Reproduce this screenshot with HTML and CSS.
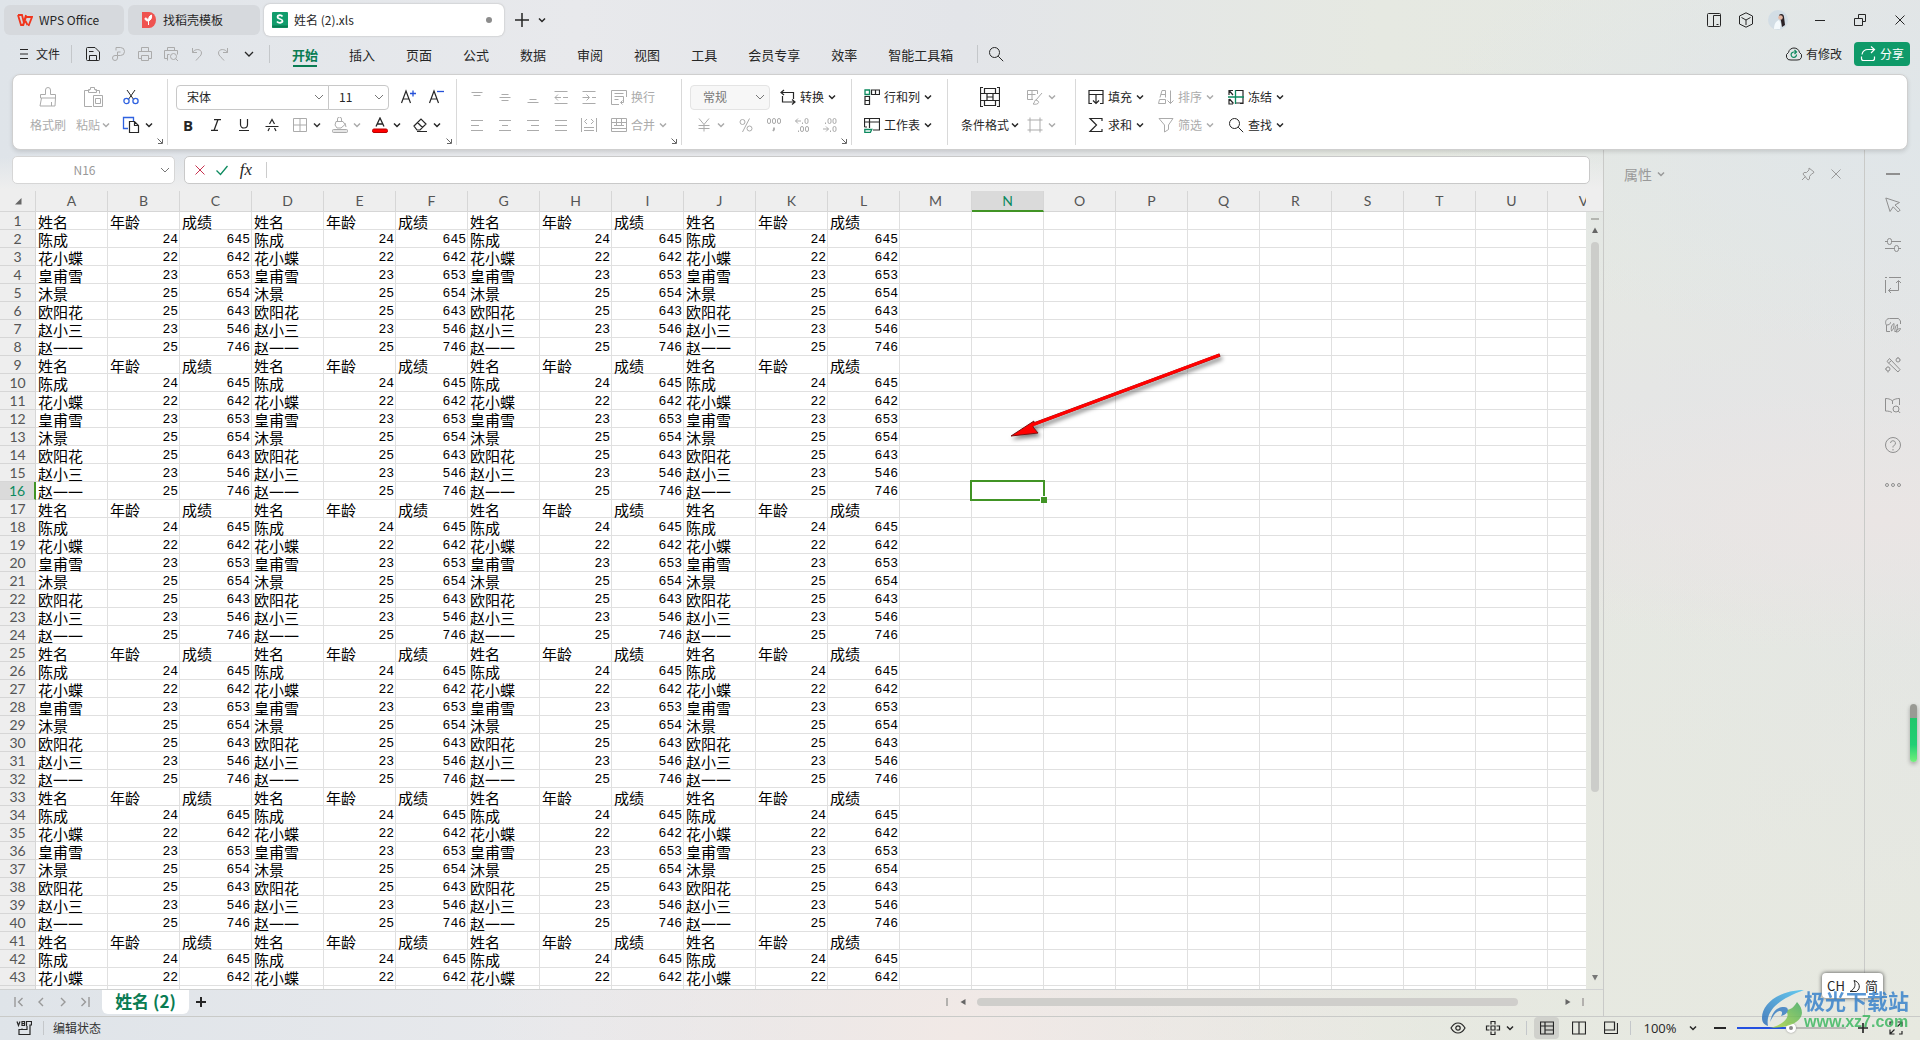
FILE: index.html
```html
<!DOCTYPE html>
<html lang="zh-CN">
<head>
<meta charset="utf-8">
<meta name="viewport" content="width=device-width, initial-scale=1">
<title>姓名 (2).xls - WPS Office</title>
<link rel="stylesheet" href="styles.css">
</head>
<body>
<svg class="sprite" aria-hidden="true">
  <symbol id="chev" viewBox="0 0 8 8"><path d="M1 2.500 4 5.500 7 2.500" stroke-width="1.500"/></symbol>
  <symbol id="launch" viewBox="0 0 8 8"><path d="M1.500 1.500 6 6M6.500 2v4.500H2"/></symbol>
  <symbol id="search" viewBox="0 0 16 16"><circle cx="6.500" cy="6.500" r="5"/><path d="m10.200 10.200 5 5"/></symbol>
  <symbol id="save" viewBox="0 0 16 16"><path d="M1.500 2.500a1 1 0 0 1 1-1H10l4.500 4.500v7.500a1 1 0 0 1-1 1h-11a1 1 0 0 1-1-1zM4.500 14.500v-5h7v5M4 5.500h4.500"/></symbol>
  <symbol id="link" viewBox="0 0 16 16"><path d="M5 4.500v-3h4.500a4 4 0 0 1 0 8H6.500v2.500a2.500 2.500 0 1 1-2.500-2.500h2.500M9.500 6H6.500v3"/></symbol>
  <symbol id="print" viewBox="0 0 16 16"><path d="M4.500 5.500v-4h7v4M4.500 12.500h-3v-7h13v7h-3M4.500 9.500h7v5h-7z"/></symbol>
  <symbol id="preview" viewBox="0 0 16 16"><path d="M4.500 4.500v-3h7v3M5 12.500H1.500v-8h13v4M4.500 14.500V8.500h2"/><circle cx="10.500" cy="10.500" r="3"/><path d="m12.700 12.700 2.300 2.300"/></symbol>
  <symbol id="undo" viewBox="0 0 16 16"><path d="M3.500 2v4.500H8M3.500 6.500c2-4 9-4 9 .5 0 3-3 4-5.500 7.500"/></symbol>
  <symbol id="redo" viewBox="0 0 16 16"><path d="M12.500 2v4.500H8M12.500 6.500c-2-4-9-4-9 .5 0 3 3 4 5.500 7.500"/></symbol>
  <symbol id="brush" viewBox="0 0 20 20"><path d="M7.500 7.500V3a2 2 0 0 1 5 0v4.500h5v3.500h-15V7.500zM3.500 11l-1.500 8h15l.5-8M13.500 19v-4"/></symbol>
  <symbol id="paste" viewBox="0 0 20 20"><path d="M6.500 3.500h-5v16H9M12.500 3.500h4v3M5.500 5.500v-3h2V.5h4v2h2v3zM10.500 8.500h9v11h-9zM12.500 11.500h5v5h-5z"/></symbol>
  <symbol id="cut" viewBox="0 0 16 16"><path d="M4 1l7 10M12 1 5 11"/><g stroke="#2f62e0" stroke-width="1.300"><circle cx="3.500" cy="12" r="2.600"/><circle cx="12.500" cy="12" r="2.600"/></g></symbol>
  <symbol id="copy" viewBox="0 0 18 18"><path d="M6 12.500H1.500v-11h10V5" stroke="#2f62e0" stroke-width="1.300"/><path d="M7.500 5.500h5l4 4v7h-9zM12.500 5.500v4h4" stroke-width="1.200"/></symbol>
  <symbol id="grow" viewBox="0 0 16 16"><path d="M1.500 14 6 2l4.500 12M3 10h6" stroke-width="1.200"/><path d="M10 4.500h6M13 1.500v6" stroke="#2450d8" stroke-width="1.300"/></symbol>
  <symbol id="shrink" viewBox="0 0 16 16"><path d="M1.500 14 6 2l4.500 12M3 10h6" stroke-width="1.200"/><path d="M9 2.500h7" stroke="#2450d8" stroke-width="1.300"/></symbol>
  <symbol id="strike" viewBox="0 0 16 16"><path d="M1.500 9.500h13" /><path d="M5.500 7 8 2.500 10.500 7M4 14l1.500-3M12 14l-1.500-3" stroke-width="1.200"/></symbol>
  <symbol id="borders" viewBox="0 0 16 16"><path d="M1.500 1.500h13v13h-13zM8 1.500v13M1.500 8h13"/></symbol>
  <symbol id="fill" viewBox="0 0 16 16"><path d="M4 4.500h7l2 3-4 3.500H5L3 8zM5.500 4.500V2a2 2 0 0 1 4 0v2.500M13 6l1 4"/><rect x=".5" y="12.500" width="15" height="3" rx="1" fill="#e6e6e6"/></symbol>
  <symbol id="fontcolor" viewBox="0 0 16 16"><path d="M4 9.500 8 1l4 8.500M5.500 7h5" stroke-width="1.300"/><rect x=".5" y="12" width="15" height="3.500" rx="1.500" fill="#f00" stroke="#b00"/></symbol>
  <symbol id="eraser" viewBox="0 0 16 16"><path d="M2 9l7-7 5 5-6 6H5zM5.500 5.500l5 5M5 14.500h10" stroke-width="1.200"/></symbol>
  <symbol id="atop" viewBox="0 0 16 16"><path d="M2.500 3.500h11M4.500 6.500h7"/></symbol>
  <symbol id="amid" viewBox="0 0 16 16"><path d="M4.500 5.500h7M2.500 8.500h11M4.500 11.500h7"/></symbol>
  <symbol id="abot" viewBox="0 0 16 16"><path d="M4.500 10.500h7M2.500 13.500h11"/></symbol>
  <symbol id="outdent" viewBox="0 0 16 16"><path d="M1.500 2.500h13M1.500 14.500h13M2 8.500h6M10 8.500h5M5 5.500l-3 3 3 3"/></symbol>
  <symbol id="indent" viewBox="0 0 16 16"><path d="M1.500 2.500h13M1.500 14.500h13M1.500 8.500H8M11 8.500h4M5.500 5.500l3 3-3 3"/></symbol>
  <symbol id="left" viewBox="0 0 16 16"><path d="M2 3.500h12M2 8.500h8M2 13.500h12"/></symbol>
  <symbol id="center" viewBox="0 0 16 16"><path d="M2 3.500h12M5 8.500h6M2 13.500h12"/></symbol>
  <symbol id="right" viewBox="0 0 16 16"><path d="M2 3.500h12M6 8.500h8M2 13.500h12"/></symbol>
  <symbol id="justify" viewBox="0 0 16 16"><path d="M2 3.500h12M2 8.500h12M2 13.500h12"/></symbol>
  <symbol id="distribute" viewBox="0 0 16 16"><path d="M.5 1v14M15.500 1v14M6 2 3.500 4.500 6 7M10 2l2.500 2.500L10 7M3 10.500h10M3 13.500h10"/></symbol>
  <symbol id="wrap" viewBox="0 0 16 16"><path d="M8 15.500H.5v-14h15V8M3.500 4.500h9M3.500 7.500h9v6H10M3.500 10.500h4M11.500 11.500l-2 2 2 2"/></symbol>
  <symbol id="merge" viewBox="0 0 16 16"><path d="M.5 1.500h15v13H.5zM.5 5.500h15M.5 11.500h15M5.500 1.500v7M10.500 1.500v7M3 8.500h10"/></symbol>
  <symbol id="convert" viewBox="0 0 16 16"><path d="M4 1 1 3.500 4 6M1 3.500h12.500V10M12 10.500l3 2.500-3 2.500M15 13H2.500V7" stroke-width="1.200"/></symbol>
  <symbol id="yen" viewBox="0 0 16 16"><path d="m3 1.500 5 6 5-6M2.500 8.500h11M2.500 11.500h11M8 7.500v7"/></symbol>
  <symbol id="pct" viewBox="0 0 16 16"><circle cx="4.500" cy="5" r="2.500"/><circle cx="11.500" cy="11.500" r="2.500"/><path d="M11.500 1.500 4.500 15"/></symbol>
  <symbol id="thou" viewBox="0 0 16 16"><rect x="1.500" y="1.500" width="3" height="5" rx="1.500"/><rect x="6.500" y="1.500" width="3" height="5" rx="1.500"/><rect x="11.500" y="1.500" width="3" height="5" rx="1.500"/><path d="M8 10.500v2l-1 1.500" stroke-width="1.800"/></symbol>
  <symbol id="decinc" viewBox="0 0 16 16"><path d="M7 4H1.500M4 1.500 1.500 4 4 6.500M8.500 5.500v1.500M4.500 13.500V15"/><rect x="11" y="1.500" width="3" height="5" rx="1.500"/><rect x="6.500" y="9.500" width="3" height="5" rx="1.500"/><rect x="11.500" y="9.500" width="3" height="5" rx="1.500"/></symbol>
  <symbol id="decdec" viewBox="0 0 16 16"><path d="M1 12h5.500M4 9.500 6.500 12 4 14.500M3.500 5.500v1.500M8.500 13.500V15"/><rect x="6" y="1.500" width="3" height="5" rx="1.500"/><rect x="11" y="1.500" width="3" height="5" rx="1.500"/><rect x="11" y="9.500" width="3" height="5" rx="1.500"/></symbol>
  <symbol id="rowcol" viewBox="0 0 16 16"><path d="M1 1h4.500v4.500H1z" stroke="#0d8a5f" stroke-width="1.300"/><path d="M7.500 1h8v4.500h-8zM11.500 1v4.500M1 7.500h4.500v8H1zM1 11.500h4.500" stroke-width="1.200"/></symbol>
  <symbol id="sheet" viewBox="0 0 16 16"><path d="M.5 10V1.500h15v11.500H9M.5 5h15M5.500 1.500V11M.5 10H3" stroke-width="1.200"/><path d="M.8 12.500h7l-1.500 3H.8z" stroke="#0d8a5f" stroke-width="1.300"/></symbol>
  <symbol id="cond" viewBox="0 0 20 20"><path d="M3 .5H.5v19H3M17 .5h2.500v19H17M4.500 1.500h11v5h-11zM1 6.500h18M1 13.500h18M4.500 13.500h11v5h-11zM7 10h6M7 6.500v7M13 6.500v7" stroke-width="1.200"/></symbol>
  <symbol id="tstyle" viewBox="0 0 16 16"><path d="M6 10.500H.5v-9h10V5M.5 5.500h8M5 1.500v9M15 4l-6 7M11 12c2 2-1 4-5 3 2-1 1-4 3-4z"/></symbol>
  <symbol id="cstyle" viewBox="0 0 16 16"><path d="M3 .5v15M13 .5v15M.5 3h15M.5 13h15"/></symbol>
  <symbol id="fillin" viewBox="0 0 16 16"><path d="M4 14.500H1v-13h14v13h-3M1 5.500h14M8 5.500v9M5 11.500l3 3 3-3" stroke-width="1.200"/></symbol>
  <symbol id="sum" viewBox="0 0 16 16"><path d="M14 4V1.500H2L8.500 8 2 14.500h12V12" stroke-width="1.200"/></symbol>
  <symbol id="sort" viewBox="0 0 16 16"><path d="M2 8.500 4 1.500h3.500v7M3 5.500h4M.5 14.500l1-4h6v4zM12.500 1.500v13M9.500 11.500l3 3 3-3"/></symbol>
  <symbol id="filter" viewBox="0 0 16 16"><path d="M1 1.500h14L10.500 8v4.500L6.500 15V8z"/></symbol>
  <symbol id="freeze" viewBox="0 0 16 16"><path d="M8 1.500h7V14H8M1 6V1.500h4M1 10v5h4M1.500 2 5 6M1.500 10l4 4.500M12 1.500h3v13h-3" stroke-width="1.200"/><path d="M0 8h16M7.500 1v14" stroke="#0d8a5f" stroke-width="1.300"/></symbol>
  <symbol id="cross" viewBox="0 0 12 12"><path d="m1.500 1.500 9 9M10.500 1.500l-9 9"/></symbol>
  <symbol id="tick" viewBox="0 0 12 12"><path d="M.5 6.500 4.500 10.500 11.500 2" stroke-width="1.300"/></symbol>
  <symbol id="dock" viewBox="0 0 16 16"><rect x="1.500" y="1.500" width="13" height="13" rx="1"/><path d="M7.500 14.500v-11h7M10.500 12.500h2"/></symbol>
  <symbol id="cube" viewBox="0 0 16 16"><path d="M8 .8 14.500 4v8L8 15.200 1.500 12V4zM3.500 5.500 8 8l4.500-2.500M8 8v5"/></symbol>
  <symbol id="cloud" viewBox="0 0 16 16"><path d="M5 14a4 4 0 0 1-2.500-7.500C3 3.500 5.500 2 8 2s5 1.500 5.500 4.500A4 4 0 0 1 11 14z"/><path d="M10.500 8.500A2.700 2.700 0 1 1 8 6h1.500M8.500 4l2 2-2 2" stroke="#0d8a5f" stroke-width="1.200"/></symbol>
  <symbol id="share" viewBox="0 0 16 16"><path d="M2 8.500c.5-3 3-5 6-5h6M11 .5l3.500 3-3.500 3.500M1.500 10.500v2a2 2 0 0 0 2 2h9a2 2 0 0 0 2-2v-2" stroke-width="1.200"/></symbol>
  <symbol id="pin" viewBox="0 0 14 14"><path d="M8 1l5 4-1 1.500H11L8.500 9.500v2.500L7 13 2 7l1-1.500h2.500L8 3zM4.500 9.500 1 13"/></symbol>
  <symbol id="pointer" viewBox="0 0 16 16"><path d="M.8 1 14.500 5.500 10 8l5.200 5-2 2-5-5.200L5 14.500z"/></symbol>
  <symbol id="sliders" viewBox="0 0 16 16"><path d="M0 4.500h2M7 4.500h9M0 11.500h9M14 11.500h2"/><rect x="2.500" y="1.500" width="4" height="6" rx="2"/><rect x="9.500" y="8.500" width="4" height="6" rx="2"/></symbol>
  <symbol id="transform" viewBox="0 0 16 16"><path d="M.5 3v13M4 .5h12M0 .5h2M13.500 4v9.500h-10M11 6l2.500-2.500L16 6M6 11l-2.500 2.500L6 16"/></symbol>
  <symbol id="gallery" viewBox="0 0 16 16"><path d="M5 14.500H1.500V8C0 7 0 1.500 4.500 1.500h9L15.500 4v3M1.500 8C6 8 5.500 5 5.500 5M6.500 14c-1-4 1-7 2.500-7.500 0 3 0 6-2.500 7.500zM10 15c-.5-4 1-7 2.500-7.500 0 3 0 6-2.500 7.500zM11 15c1-3 3-3.500 4.500-3.500-.5 2-2 3.500-4.500 3.500z"/></symbol>
  <symbol id="wand" viewBox="0 0 16 16"><path d="M4.500 1.500 15 12.500l-2 2.500L2 4.500zM3.500 6 6 4"/><circle cx="13" cy="3" r="2"/><circle cx="3" cy="12" r="2"/><path d="M13 0v1M15.500 3h-1M3 9.500V10M3 14v1.500M0 12h1"/></symbol>
  <symbol id="book" viewBox="0 0 16 16"><path d="M7 3.500C5 2 3 1.500.5 1.500V14c3 0 5 .5 6.500 1.500M7.500 7V3.500C9.500 2 12 1.500 14.500 1.500V8"/><circle cx="11" cy="12" r="3"/><path d="m13.200 14 2 2"/></symbol>
  <symbol id="help" viewBox="0 0 16 16"><circle cx="8" cy="8" r="7.500"/><path d="M5.500 6a2.500 2.500 0 1 1 3.500 2.500c-1 .5-1 1-1 2M8 12v1.500"/></symbol>
  <symbol id="dots" viewBox="0 0 16 16"><circle cx="2" cy="8" r="1.500"/><circle cx="8" cy="8" r="1.500"/><circle cx="14" cy="8" r="1.500"/></symbol>
  <symbol id="first" viewBox="0 0 10 10"><path d="M1 0v10M8.500 1 4.500 5l4 4" stroke-width="1.400"/></symbol>
  <symbol id="prev" viewBox="0 0 10 10"><path d="M7 1 3 5l4 4" stroke-width="1.400"/></symbol>
  <symbol id="next" viewBox="0 0 10 10"><path d="M3 1l4 4-4 4" stroke-width="1.400"/></symbol>
  <symbol id="last" viewBox="0 0 10 10"><path d="M9 0v10M1.500 1l4 4-4 4" stroke-width="1.400"/></symbol>
  <symbol id="plus" viewBox="0 0 12 12"><path d="M6 0v12M0 6h12" stroke-width="1.300"/></symbol>
  <symbol id="macro" viewBox="0 0 16 16"><path d="m1 1.500 1.500 4L4 1.500M6 1.500v4h2.500v-4zM6 3.500h2.500M10.500 6V1.500h5V5H14v9.500H3V9.500h8V6M6 9.500v-1" stroke-width="1.200"/></symbol>
  <symbol id="eye" viewBox="0 0 16 16"><path d="M1 8c2-3.500 4.500-5 7-5s5 1.500 7 5c-2 3.500-4.500 5-7 5S3 11.500 1 8z" stroke-width="1.200"/><circle cx="8" cy="8" r="2.200" stroke-width="1.200"/></symbol>
  <symbol id="hub" viewBox="0 0 16 16"><path d="M6 6h4v4H6zM6 4.500v-3h4v3M6 11.500v3h4v-3M4.500 6h-3v4h3M11.500 6h3v4h-3" stroke-width="1.200"/></symbol>
  <symbol id="vnormal" viewBox="0 0 14 14"><path d="M.5 1h13v12H.5zM.5 5h13M5 1v12M5 9h8.500" stroke-width="1.200"/></symbol>
  <symbol id="vsplit" viewBox="0 0 14 14"><path d="M.5 1h13v12H.5zM7 1v12" stroke-width="1.200"/></symbol>
  <symbol id="vpage" viewBox="0 0 14 14"><path d="M.5 1h10v8H.5zM.5 12.500h13V2M.5 9v3.500" stroke-width="1.200"/></symbol>
  <symbol id="full" viewBox="0 0 14 14"><path d="M8.500 1H13v4.500M13 1 8.500 5.500M5.500 13H1V8.500M1 13l4.500-4.500M1 4V1h3M13 10v3h-3" stroke-width="1.200"/></symbol>
</svg>

<header class="titlebar">
  <nav class="doc-tabs" aria-label="文档">
    <button class="doc-tab tab-home">
      <svg class="logo" viewBox="0 0 16 16"><path d="M1 3h4l2 8 2-6h6l-3.500 9M1 3l3 10h2l3-10M8.500 9l2 4" stroke="#f0361e" stroke-width="1.800"/></svg>
      <span>WPS Office</span>
    </button>
    <button class="doc-tab tab-docer">
      <svg class="logo" viewBox="0 0 16 16"><path d="M1 0h7a7 8 0 0 1 0 16H1z" fill="#ef5350" stroke="none"/><path d="M7.500 13V9C4 9 4 7 4 6c2 0 3 1 3.500 3 0-3 .5-5 3-6 .5 3-.5 5-3 6" fill="#fff" stroke="#fff"/></svg>
      <span>找稻壳模板</span>
    </button>
    <button class="doc-tab tab-doc">
      <svg class="logo" viewBox="0 0 16 16"><rect width="16" height="16" rx="1" fill="#119c6c" stroke="none"/><path d="M0 14.500h16" stroke="#0a7c53" stroke-width="2"/><path d="M10.500 4.500C9 2.500 5.500 3 5.500 5c0 2.500 5 1.500 5 4 0 2-4 2.500-5.500.500" stroke="#fff" stroke-width="1.800"/></svg>
      <span class="doc-name">姓名 (2).xls</span><i class="dirty"></i>
    </button>
    <button class="ico new-tab" aria-label="新建"><svg class="s14"><use href="#plus"/></svg></button>
    <button class="ico tab-list" aria-label="更多标签"><svg class="s8"><use href="#chev"/></svg></button>
  </nav>
  <div class="window-tools">
    <button class="ico" aria-label="侧栏"><svg><use href="#dock"/></svg></button>
    <button class="ico" aria-label="应用"><svg><use href="#cube"/></svg></button>
    <button class="ico avatar-button" aria-label="账号"><svg class="avatar" viewBox="0 0 20 20"><circle cx="10" cy="10" r="10" fill="#d2dde5" stroke="none"/><path d="M6 19c0-5 2-8 5-9l2 4-1 5z" fill="#f4f9fc" stroke="none"/><path d="M11 5c2-2 5-1 5 2l1 8-3 2-1-6z" fill="#2a2226" stroke="none"/><circle cx="12.500" cy="7.500" r="2.300" fill="#e5b8a4" stroke="none"/></svg></button>
    <button class="ico win" aria-label="最小化"><svg class="s12"><path d="M1 6.500h10"/></svg></button>
    <button class="ico win" aria-label="还原"><svg class="s12"><path d="M.5 4.500h8v7h-8zM4.500 4V.5h7v7H9"/></svg></button>
    <button class="ico win" aria-label="关闭"><svg class="s12"><use href="#cross"/></svg></button>
  </div>
</header>

<div class="menubar">
  <button class="file-menu"><svg class="s10" viewBox="0 0 10 10"><path d="M1 .5h8M1 5h8M1 9.500h8"/></svg><span>文件</span></button>
  <i class="vline"></i>
  <div class="quick">
    <button class="ico" aria-label="保存"><svg><use href="#save"/></svg></button>
    <button class="ico off" aria-label="输出"><svg><use href="#link"/></svg></button>
    <button class="ico off" aria-label="打印"><svg><use href="#print"/></svg></button>
    <button class="ico off" aria-label="打印预览"><svg><use href="#preview"/></svg></button>
    <button class="ico off" aria-label="撤销"><svg><use href="#undo"/></svg></button>
    <button class="ico off" aria-label="恢复"><svg><use href="#redo"/></svg></button>
    <button class="ico" aria-label="更多"><svg class="s10" viewBox="0 0 10 10"><path d="m1 3 4 4 4-4" stroke-width="1.300"/></svg></button>
  </div>
  <i class="vline"></i>
  <nav class="menus">
    <a href="#" class="current">开始</a><a href="#">插入</a><a href="#">页面</a><a href="#">公式</a><a href="#">数据</a><a href="#">审阅</a><a href="#">视图</a><a href="#">工具</a><a href="#">会员专享</a><a href="#">效率</a><a href="#">智能工具箱</a>
  </nav>
  <i class="vline"></i>
  <button class="ico menu-search" aria-label="搜索"><svg><use href="#search"/></svg></button>
  <button class="plain changes"><svg><use href="#cloud"/></svg><span>有修改</span></button>
  <button class="share"><svg><use href="#share"/></svg><span>分享</span></button>
</div>

<section class="ribbon" aria-label="开始">
  <div class="group clipboard">
    <button class="big off"><svg class="s20"><use href="#brush"/></svg><span>格式刷</span></button>
    <button class="big off"><svg class="s20"><use href="#paste"/></svg><span>粘贴<svg class="s8"><use href="#chev"/></svg></span></button>
    <div class="rows">
      <div class="row"><button class="ico w28" aria-label="剪切"><svg><use href="#cut"/></svg></button></div>
      <div class="row"><button class="ico w40" aria-label="复制"><svg class="s18"><use href="#copy"/></svg><svg class="s8"><use href="#chev"/></svg></button></div>
    </div>
    <button class="launcher" aria-label="剪贴板设置"><svg class="s8"><use href="#launch"/></svg></button>
  </div>
  <div class="group font">
    <div class="rows">
      <div class="row">
        <div class="combo"><select class="sel family" aria-label="字体"><option>宋体</option></select><select class="sel size" aria-label="字号"><option>11</option></select></div>
        <button class="ico w28 after-combo" aria-label="增大字号"><svg><use href="#grow"/></svg></button>
        <button class="ico w28" aria-label="减小字号"><svg><use href="#shrink"/></svg></button>
      </div>
      <div class="row marks">
        <button class="ico w28 bold" aria-label="加粗">B</button>
        <button class="ico w28" aria-label="倾斜"><svg class="s12"><path d="M4 .5h7M1 11.500h7M8 .5l-4 11" stroke-width="1.300"/></svg></button>
        <button class="ico w28" aria-label="下划线"><svg class="s12"><path d="M2.500 0v5.500a3.500 3.500 0 0 0 7 0V0M1 11.500h10" stroke-width="1.200"/></svg></button>
        <button class="ico w28" aria-label="删除线"><svg><use href="#strike"/></svg></button>
        <button class="ico w40 off" aria-label="边框"><svg><use href="#borders"/></svg><svg class="s8 dark"><use href="#chev"/></svg></button>
        <button class="ico w40 off" aria-label="填充颜色"><svg><use href="#fill"/></svg><svg class="s8"><use href="#chev"/></svg></button>
        <button class="ico w40" aria-label="字体颜色"><svg><use href="#fontcolor"/></svg><svg class="s8"><use href="#chev"/></svg></button>
        <button class="ico w40" aria-label="清除"><svg><use href="#eraser"/></svg><svg class="s8"><use href="#chev"/></svg></button>
      </div>
    </div>
    <button class="launcher" aria-label="字体设置"><svg class="s8"><use href="#launch"/></svg></button>
  </div>
  <div class="group align off">
    <div class="rows">
      <div class="row">
        <button class="ico w28" aria-label="顶端对齐"><svg><use href="#atop"/></svg></button>
        <button class="ico w28" aria-label="垂直居中"><svg><use href="#amid"/></svg></button>
        <button class="ico w28" aria-label="底端对齐"><svg><use href="#abot"/></svg></button>
        <button class="ico w28" aria-label="减少缩进"><svg><use href="#outdent"/></svg></button>
        <button class="ico w28" aria-label="增加缩进"><svg><use href="#indent"/></svg></button>
        <button class="cmd"><svg><use href="#wrap"/></svg><span>换行</span></button>
      </div>
      <div class="row">
        <button class="ico w28" aria-label="左对齐"><svg><use href="#left"/></svg></button>
        <button class="ico w28" aria-label="居中"><svg><use href="#center"/></svg></button>
        <button class="ico w28" aria-label="右对齐"><svg><use href="#right"/></svg></button>
        <button class="ico w28" aria-label="两端对齐"><svg><use href="#justify"/></svg></button>
        <button class="ico w28" aria-label="分散对齐"><svg><use href="#distribute"/></svg></button>
        <button class="cmd"><svg><use href="#merge"/></svg><span>合并</span><svg class="s8"><use href="#chev"/></svg></button>
      </div>
    </div>
    <button class="launcher" aria-label="对齐设置"><svg class="s8"><use href="#launch"/></svg></button>
  </div>
  <div class="group number">
    <div class="rows">
      <div class="row">
        <select class="sel format" aria-label="数字格式" disabled><option>常规</option></select>
        <button class="cmd"><svg><use href="#convert"/></svg><span>转换</span><svg class="s8"><use href="#chev"/></svg></button>
      </div>
      <div class="row off marks">
        <button class="ico w44" aria-label="货币"><svg><use href="#yen"/></svg><svg class="s8"><use href="#chev"/></svg></button>
        <button class="ico w28" aria-label="百分比"><svg><use href="#pct"/></svg></button>
        <button class="ico w28" aria-label="千位分隔"><svg><use href="#thou"/></svg></button>
        <button class="ico w28" aria-label="增加小数位"><svg><use href="#decinc"/></svg></button>
        <button class="ico w28" aria-label="减少小数位"><svg><use href="#decdec"/></svg></button>
      </div>
    </div>
    <button class="launcher" aria-label="数字设置"><svg class="s8"><use href="#launch"/></svg></button>
  </div>
  <div class="group cells">
    <div class="rows">
      <div class="row"><button class="cmd"><svg><use href="#rowcol"/></svg><span>行和列</span><svg class="s8"><use href="#chev"/></svg></button></div>
      <div class="row"><button class="cmd"><svg><use href="#sheet"/></svg><span>工作表</span><svg class="s8"><use href="#chev"/></svg></button></div>
    </div>
  </div>
  <div class="group styles">
    <button class="big"><svg class="s20"><use href="#cond"/></svg><span>条件格式<svg class="s8"><use href="#chev"/></svg></span></button>
    <div class="rows off">
      <div class="row"><button class="ico w40" aria-label="表格样式"><svg><use href="#tstyle"/></svg><svg class="s8"><use href="#chev"/></svg></button></div>
      <div class="row"><button class="ico w40" aria-label="单元格样式"><svg><use href="#cstyle"/></svg><svg class="s8"><use href="#chev"/></svg></button></div>
    </div>
  </div>
  <div class="group edit">
    <div class="rows">
      <div class="row"><button class="cmd"><svg><use href="#fillin"/></svg><span>填充</span><svg class="s8"><use href="#chev"/></svg></button><button class="cmd off"><svg><use href="#sort"/></svg><span>排序</span><svg class="s8"><use href="#chev"/></svg></button><button class="cmd"><svg><use href="#freeze"/></svg><span>冻结</span><svg class="s8"><use href="#chev"/></svg></button></div>
      <div class="row"><button class="cmd"><svg><use href="#sum"/></svg><span>求和</span><svg class="s8"><use href="#chev"/></svg></button><button class="cmd off"><svg><use href="#filter"/></svg><span>筛选</span><svg class="s8"><use href="#chev"/></svg></button><button class="cmd"><svg><use href="#search"/></svg><span>查找</span><svg class="s8"><use href="#chev"/></svg></button></div>
    </div>
  </div>
</section>

<div class="workspace">
  <main class="book">
    <div class="formula-row">
      <select class="sel name-box" aria-label="名称框"><option>N16</option></select>
      <div class="formula">
        <button class="ico red" aria-label="取消"><svg class="s12"><use href="#cross"/></svg></button>
        <button class="ico green" aria-label="输入"><svg class="s12"><use href="#tick"/></svg></button>
        <button class="ico fx" aria-label="插入函数">fx</button>
        <input class="formula-input" type="text" aria-label="编辑栏">
      </div>
    </div>
    <div class="grid-area">
      <div class="grid-view">
        <table class="grid" id="grid">
          <thead><tr id="letters"><th class="corner"><svg class="s8" viewBox="0 0 8 8"><path d="M7.500 1v6.500H1z" fill="#666" stroke="none"/></svg></th></tr></thead>
          <tbody id="cells"></tbody>
        </table>
        <svg class="arrow" viewBox="0 0 230 100"><path d="M216 5 30 74" stroke="#7a1010" stroke-width="3.400"/><path d="M7 86 30 71l-1 6 5 6z" fill="#f00" stroke="#7a1010"/><path d="M215.500 5 28 75" stroke="#f00" stroke-width="3"/></svg>
      </div>
      <div class="vscroll">
        <i class="head"></i><i class="mark"></i>
        <button aria-label="向上滚动"><svg class="s8" viewBox="0 0 8 8"><path d="M4 1.500 7 7H1z" fill="#666" stroke="none"/></svg></button>
        <div class="track"><div class="thumb"></div></div>
        <button aria-label="向下滚动"><svg class="s8" viewBox="0 0 8 8"><path d="M4 6.500 7 1H1z" fill="#777" stroke="none"/></svg></button>
      </div>
    </div>
    <div class="sheet-bar">
      <div class="sheet-nav">
        <button aria-label="第一张"><svg class="s10"><use href="#first"/></svg></button>
        <button aria-label="上一张"><svg class="s10"><use href="#prev"/></svg></button>
        <button aria-label="下一张"><svg class="s10"><use href="#next"/></svg></button>
        <button aria-label="最后一张"><svg class="s10"><use href="#last"/></svg></button>
      </div>
      <button class="sheet-tab">姓名 (2)</button>
      <button class="ico add-sheet" aria-label="新建工作表"><svg class="s10" viewBox="0 0 12 12"><path d="M6 0v12M0 6h12" stroke-width="2.400"/></svg></button>
      <div class="hscroll">
        <i class="bar"></i>
        <button aria-label="向左滚动"><svg class="s8" viewBox="0 0 8 8"><path d="M1.500 4 6.500 1v6z" fill="#666" stroke="none"/></svg></button>
        <div class="htrack"><div class="hthumb"></div></div>
        <button aria-label="向右滚动"><svg class="s8" viewBox="0 0 8 8"><path d="M6.500 4 1.500 1v6z" fill="#666" stroke="none"/></svg></button>
        <i class="bar"></i>
      </div>
    </div>
  </main>
  <aside class="panel">
    <div class="panel-head">
      <button class="plain panel-title"><span>属性</span><svg class="s8"><use href="#chev"/></svg></button>
      <button class="ico w28" aria-label="固定"><svg class="s14"><use href="#pin"/></svg></button>
      <button class="ico w28" aria-label="关闭面板"><svg class="s12"><use href="#cross"/></svg></button>
    </div>
  </aside>
  <nav class="side" aria-label="侧边工具">
    <button aria-label="收起"><svg><path d="M1 8h14" stroke-width="2"/></svg></button>
    <button aria-label="选择"><svg><use href="#pointer"/></svg></button>
    <button aria-label="属性"><svg><use href="#sliders"/></svg></button>
    <button aria-label="变换"><svg><use href="#transform"/></svg></button>
    <button aria-label="素材"><svg><use href="#gallery"/></svg></button>
    <button aria-label="工具"><svg><use href="#wand"/></svg></button>
    <button aria-label="查阅"><svg><use href="#book"/></svg></button>
    <button aria-label="帮助"><svg><use href="#help"/></svg></button>
    <button aria-label="更多"><svg><use href="#dots"/></svg></button>
  </nav>
</div>

<footer class="status">
  <button class="ico macro" aria-label="宏"><svg><use href="#macro"/></svg></button>
  <i class="vline"></i>
  <span class="state">编辑状态</span>
  <div class="views">
    <button class="ico w28" aria-label="护眼模式"><svg><use href="#eye"/></svg></button>
    <button class="ico w40" aria-label="阅读模式"><svg><use href="#hub"/></svg><svg class="s8"><use href="#chev"/></svg></button>
    <i class="vline"></i>
    <button class="ico view active" aria-label="普通视图"><svg class="s14"><use href="#vnormal"/></svg></button>
    <button class="ico view" aria-label="分页预览"><svg class="s14"><use href="#vsplit"/></svg></button>
    <button class="ico view" aria-label="页面布局"><svg class="s14"><use href="#vpage"/></svg></button>
    <i class="vline"></i>
    <button class="plain zoom"><span>100%</span><svg class="s8"><use href="#chev"/></svg></button>
    <button class="ico minus" aria-label="缩小"><svg class="s12"><path d="M0 6h12" stroke-width="2"/></svg></button>
    <input class="zoom-range" type="range" min="0" max="100" value="49" aria-label="缩放">
    <button class="ico" aria-label="放大"><svg class="s10" viewBox="0 0 12 12"><path d="M6 0v12M0 6h12" stroke-width="2"/></svg></button>
    <button class="ico full" aria-label="全屏"><svg class="s14"><use href="#full"/></svg></button>
  </div>
</footer>

<div class="meter"></div>
<div class="ime"><span>CH</span><svg class="s12" viewBox="0 0 12 12"><path d="M5 .5c6 1.500 7 8 2.500 11H1C6 9 7 5 5 .5z"/></svg><span>简</span></div>
<div class="watermark">
  <svg class="swirl" viewBox="0 0 42 42"><defs><linearGradient id="wb" x1="0" y1="1" x2="1" y2="0"><stop offset="0" stop-color="#2465b5"/><stop offset="1" stop-color="#45c3f3"/></linearGradient><linearGradient id="wg" x1="0" y1="1" x2="1" y2="0"><stop offset="0" stop-color="#b6d93d"/><stop offset="1" stop-color="#38a85c"/></linearGradient></defs><path d="M42 1C20 1 0 13 0 29c0 5 3 7 6 8-2-11 3-24 36-36z" fill="url(#wb)"/><path d="M35 13c12 13 2 26-28 26 12-2 24-11 16-18 6 0 9-3 12-8z" fill="url(#wg)"/><path d="M8 33c2-9 6-15 14-15 6 0 5 7-3 9 2-3 1-5-1-5-4 0-7 5-10 11z" fill="#2f78c2"/></svg>
  <div class="wm-text"><span class="wm-name">极光下载站</span><span class="wm-url">www.xz7.com</span></div>
</div>
<script src="grid.js"></script>
</body>
</html>
```

FILE: styles.css
```css
* { box-sizing: border-box; }
html, body { height: 100%; }
body {
  margin: 0;
  display: flex;
  flex-direction: column;
  overflow: hidden;
  font: 12px/18px "Noto Sans CJK SC", "Noto Sans", sans-serif;
  color: #262626;
  background:
    radial-gradient(ellipse at 100% 12%, #e0e6e9 0, rgba(224, 230, 233, 0) 18%),
    radial-gradient(ellipse at 98% 50%, #eae5e4 0, rgba(234, 229, 228, 0) 18%),
    radial-gradient(ellipse at 92% 42%, #e5e5e6 0, rgba(229, 229, 230, 0) 22%),
    radial-gradient(ellipse at 50% 100%, #f1e9e6 0, rgba(240, 233, 230, 0) 35%),
    radial-gradient(ellipse at 100% 100%, #e7e9e0 0, rgba(231, 233, 224, 0) 40%),
    linear-gradient(90deg, #dfe4e9 0, #e8e9ec 30%, #e3e5e9 50%, #e6e9e2 72%, #e5e8e3 86%, #e3e5e5 100%);
}
button, select, input { font: inherit; color: inherit; }
button { padding: 0; border: 0; background: none; display: flex; align-items: center; justify-content: center; }
svg { display: block; flex: none; width: 16px; height: 16px; fill: none; stroke: currentColor; stroke-width: 1; }
a { color: inherit; text-decoration: none; }
i { flex: none; }
.sprite { position: absolute; width: 0; height: 0; }
.s8 { width: 8px; height: 8px; }
.s10 { width: 10px; height: 10px; }
.s12 { width: 12px; height: 12px; }
.s14 { width: 14px; height: 14px; }
.s18 { width: 18px; height: 18px; }
.s20 { width: 20px; height: 20px; }
.off { color: #ababab; }
.dark { color: #333; }
.ico { flex: none; width: 20px; height: 20px; }
.w28 { width: 28px; }
.w40 { width: 40px; gap: 5px; }
.w44 { width: 44px; gap: 5px; }
.plain { gap: 4px; }
.vline { width: 1px; height: 18px; background: #c4c7ca; }

.titlebar { flex: none; height: 40px; display: flex; justify-content: space-between; padding: 0 10px 0 4px; }
.doc-tabs { display: flex; align-items: center; gap: 4px; }
.doc-tab { height: 30px; border-radius: 6px; gap: 6px; justify-content: flex-start; padding: 0 13px; background: #d6d9dd; }
.tab-home { width: 120px; }
.tab-docer { width: 132px; }
.tab-doc { width: 240px; height: 32px; padding: 0 12px 0 8px; background: #fff; box-shadow: 0 0 2px #aaa; }
.doc-name { flex: 1; text-align: left; }
.dirty { width: 6px; height: 6px; border-radius: 50%; background: #8c8c8c; }
.new-tab { margin-left: 4px; }
.tab-list { margin-left: -4px; }
.window-tools { display: flex; align-items: center; gap: 12px; }
.win { margin-left: 8px; }
.avatar { width: 20px; height: 20px; }
.avatar-button { margin-right: 2px; }

.menubar { flex: none; height: 34px; display: flex; align-items: center; padding: 0 10px 6px 19px; }
.file-menu { gap: 7px; margin-right: 11px; }
.quick { display: flex; gap: 6px; padding: 0 10px 0 11px; }
.menus { display: flex; gap: 31px; padding: 2px 24px 0 22px; font-size: 13px; line-height: 20px; }
.current { color: #0a7c53; font-weight: 700; box-shadow: 0 4px 0 -2px #0a7c53, 0 3px 0 -1px #0a7c53; }
.menu-search { margin-left: 8px; margin-right: auto; }
.changes { margin-right: 12px; }
.share { width: 56px; height: 24px; gap: 4px; border-radius: 4px; background: #0f9a69; color: #fff; }

.ribbon { flex: none; height: 76px; margin: 0 12px; display: flex; background: #fff; border: 1px solid #cfcfcf; border-radius: 8px; box-shadow: 0 2px 4px rgba(0, 0, 0, .12); z-index: 1; }
.group { position: relative; display: flex; align-items: center; margin: 4px 0; border-right: 1px solid #d9d9d9; }
.edit { border-right: 0; }
.clipboard { width: 155px; padding-left: 14px; gap: 3px; }
.font { width: 289px; padding-left: 8px; }
.align { width: 225px; padding-left: 6px; }
.number { width: 170px; padding-left: 8px; }
.cells { width: 96px; padding-left: 12px; }
.styles { width: 128px; padding-left: 13px; gap: 2px; }
.edit { padding-left: 12px; }
.rows { display: flex; flex-direction: column; gap: 4px; padding-bottom: 2px; }
.row { display: flex; align-items: center; height: 24px; }
.marks { margin-left: -2px; }
.big { flex-direction: column; height: 56px; justify-content: space-between; padding: 3px 0 6px; min-width: 42px; }
.big span { display: flex; align-items: center; gap: 2px; }
.cmd { gap: 4px; height: 24px; }
.edit .cmd { width: 70px; justify-content: flex-start; }
.align .cmd { padding-left: 8px; }
.number .cmd { padding-left: 10px; }
.launcher { position: absolute; right: 2px; bottom: -1px; width: 10px; height: 10px; color: #666; }
.sel { appearance: none; border: 1px solid #c8c8c8; border-radius: 4px; background: #fff url("data:image/svg+xml,%3Csvg xmlns='http://www.w3.org/2000/svg' width='10' height='10' fill='none' stroke='%23777'%3E%3Cpath d='M1 3l4 4 4-4'/%3E%3C/svg%3E") right 4px center no-repeat; height: 25px; padding: 0 10px; outline: 0; }
.combo { display: flex; }
.family { width: 153px; border-radius: 4px 0 0 4px; }
.size { width: 61px; margin-left: -1px; border-radius: 0 4px 4px 0; }
.after-combo { margin-left: 5px; }
.format { width: 80px; padding: 0 12px; border-color: #e4e4e4; background-color: #f7f7f7; color: #777; opacity: 1; }
.bold { font: 700 15px/20px "Open Sans", sans-serif; }

.workspace { flex: 1; min-height: 0; display: flex; margin-top: -1px; }
.book { flex: 1; min-width: 0; display: flex; flex-direction: column; border-right: 1px solid #c9cac8; }
.formula-row { flex: none; display: flex; gap: 9px; padding: 7px 13px 7px 12px; background: linear-gradient(rgba(238, 238, 238, 0) 20%, #eee 95%); }
.name-box { width: 163px; height: 28px; border-color: #d6d6d6; border-radius: 5px; text-align-last: center; padding-right: 28px; color: #999; }
.formula { flex: 1; display: flex; align-items: center; height: 28px; gap: 2px; padding-left: 5px; border: 1px solid #c9c9c9; border-radius: 5px; background: #fff; }
.red { color: #c8324f; }
.green { color: #0d8a5f; }
.fx { width: 24px; font: italic 17px/20px "Liberation Serif", serif; }
.formula-input { flex: 1; height: 16px; margin-left: 6px; border: 0; border-left: 1px solid #ccc; outline: 0; background: none; }

.grid-area { flex: 1; min-height: 0; display: flex; border-bottom: 1px solid #d0d2d2; }
.grid-view { position: relative; flex: 1; overflow: hidden; background: #fff; }
.grid { width: 1620px; table-layout: fixed; border-collapse: separate; border-spacing: 0; color: #000; }
.grid th, .grid td { width: 72px; height: 18px; padding: 0; border: solid #e0e0e0; border-width: 0 1px 1px 0; white-space: nowrap; }
.grid thead th { height: 21px; background: #eee; border-color: #d6d6d6; color: #555; font: 14px/20px Lato, sans-serif; }
.grid th:first-child { width: 36px; background: #eee; border-color: #d6d6d6; color: #555; font: 14px/17px Lato, sans-serif; }
.corner svg { margin-left: 14px; }
.grid td { font: 15px/15px "Noto Sans CJK SC", sans-serif; padding: 2px 2px 0; }
.grid td.num { text-align: right; font-family: "Liberation Mono", monospace; font-size: 13px; padding-right: 1px; }
.grid thead th.on { background: #dadada; color: #0d8a5f; border-bottom: 2px solid #419425; line-height: 18px; }
.grid tbody th.on { background: #dadada; color: #0d8a5f; border-right: 2px solid #419425; }
.selected { position: relative; }
.selected::before { content: ""; position: absolute; inset: -2px; border: 2px solid #419425; }
.selected::after { content: ""; position: absolute; right: -4px; bottom: -4px; width: 6px; height: 6px; background: #419425; border: solid #fff; border-width: 1px 0 0 1px; }
.arrow { position: absolute; left: 1004px; top: 159px; width: 230px; height: 100px; filter: drop-shadow(2px 3px 2px rgba(0, 0, 0, .5)); }

.vscroll { flex: none; width: 17px; display: flex; flex-direction: column; align-items: center; padding-bottom: 7px; }
.head { width: 100%; height: 21px; background: #eee; border-bottom: 1px solid #d6d6d6; }
.mark { width: 8px; height: 2px; margin: 6px 0; background: #b3b5b0; }
.track { flex: 1; width: 8px; margin: 8px 0; }
.thumb { height: 76%; border-radius: 4px; background: #cccdca; }

.sheet-bar { flex: none; height: 26px; display: flex; align-items: center; padding-bottom: 2px; }
.sheet-nav { display: flex; gap: 12px; padding: 0 12px 0 14px; color: #999; }
.sheet-tab { align-self: flex-start; width: 87px; height: 24px; border-radius: 0 0 6px 6px; background: #fff; color: #0a7c53; font-size: 17px; font-weight: 700; line-height: 20px; padding-bottom: 2px; }
.add-sheet { width: 24px; }
.hscroll { display: flex; align-items: center; flex: 0 0 638px; margin-left: auto; margin-right: 19px; }
.bar { width: 2px; height: 8px; background: #b3b1ae; }
.hscroll button { margin: 0 10px 0 11px; }
.htrack { flex: 1; }
.hthumb { width: 94%; height: 8px; border-radius: 4px; background: #cfcecb; }

.panel { flex: none; width: 261px; border-right: 1px solid #c9cac8; }
.panel-head { display: flex; align-items: center; height: 50px; padding: 0 14px 0 20px; color: #999; }
.panel-title { gap: 5px; margin-right: auto; font-size: 14px; }
.side { flex: none; width: 55px; padding-top: 10px; display: flex; flex-direction: column; align-items: center; gap: 10px; color: #8f8f8f; }
.side button { width: 30px; height: 30px; }
.side button:first-child { margin-bottom: -9px; }

.status { flex: none; height: 24px; display: flex; align-items: center; border-top: 1px solid #c9cac8; padding: 0 14px 2px; }
.status .vline { height: 14px; }
.macro { margin-right: 9px; }
.state { margin-left: 9px; color: #333; }
.views { margin-left: auto; display: flex; align-items: center; gap: 7px; }
.view { width: 25px; height: 22px; border-radius: 4px; }
.active { background: #d0d1cc; }
.zoom { width: 64px; gap: 12px; font: 13px/18px "Open Sans", sans-serif; }
.minus { margin-left: 1px; }
.full { margin-left: 6px; }
.zoom-range { appearance: none; width: 109px; height: 12px; margin: 0; background: linear-gradient(90deg, #2450e0 49%, #b8b8b4 49%) center / 100% 2px no-repeat; }
.zoom-range::-webkit-slider-thumb { appearance: none; width: 10px; height: 10px; border: 3px solid #fff; border-radius: 50%; background: #888; box-shadow: 0 0 2px #888; }

.meter { position: absolute; right: 3px; top: 704px; width: 7px; height: 58px; border-radius: 4px; background: linear-gradient(#999a94 24%, #20c76b 24%, #22cf74 70%, #73f07b 100%); box-shadow: 0 2px 4px rgba(0, 0, 0, .3); }
.ime { position: absolute; right: 37px; bottom: 42px; width: 61px; height: 25px; display: flex; align-items: center; justify-content: center; gap: 4px; border-radius: 4px; background: #fff; box-shadow: 0 0 4px #444; font-size: 13px; }
.watermark { position: absolute; right: 11px; bottom: 8px; display: flex; align-items: center; opacity: .8; pointer-events: none; }
.swirl { width: 42px; height: 42px; stroke: none; }
.wm-text { display: flex; flex-direction: column; }
.wm-name { color: #2f7dca; font-size: 21px; line-height: 24px; font-weight: 700; }
.wm-url { color: #35b55b; font: 700 16px/20px "Liberation Sans", sans-serif; }
```

FILE: grid.js
```js
const columns = 'ABCDEFGHIJKLMNOPQRSTUV'.split('');
const block = [
  ['姓名', '年龄', '成绩'],
  ['陈成', 24, 645],
  ['花小蝶', 22, 642],
  ['皇甫雪', 23, 653],
  ['沐景', 25, 654],
  ['欧阳花', 25, 643],
  ['赵小三', 23, 546],
  ['赵一一', 25, 746]
];
const active = { row: 16, column: 'N' };
const filledColumns = 12;

const letters = document.getElementById('letters');
columns.forEach(name => {
  const th = document.createElement('th');
  th.textContent = name;
  if (name === active.column) th.className = 'on';
  letters.append(th);
});

const body = document.getElementById('cells');
for (let r = 1; r <= 44; r++) {
  const tr = document.createElement('tr');
  const th = document.createElement('th');
  th.textContent = r;
  if (r === active.row) th.className = 'on';
  tr.append(th);
  columns.forEach((name, c) => {
    const td = document.createElement('td');
    if (c < filledColumns) {
      const value = block[(r - 1) % 8][c % 3];
      td.textContent = value;
      if (typeof value === 'number') td.className = 'num';
    }
    if (r === active.row && name === active.column) td.className = 'selected';
    tr.append(td);
  });
  body.append(tr);
}
```
